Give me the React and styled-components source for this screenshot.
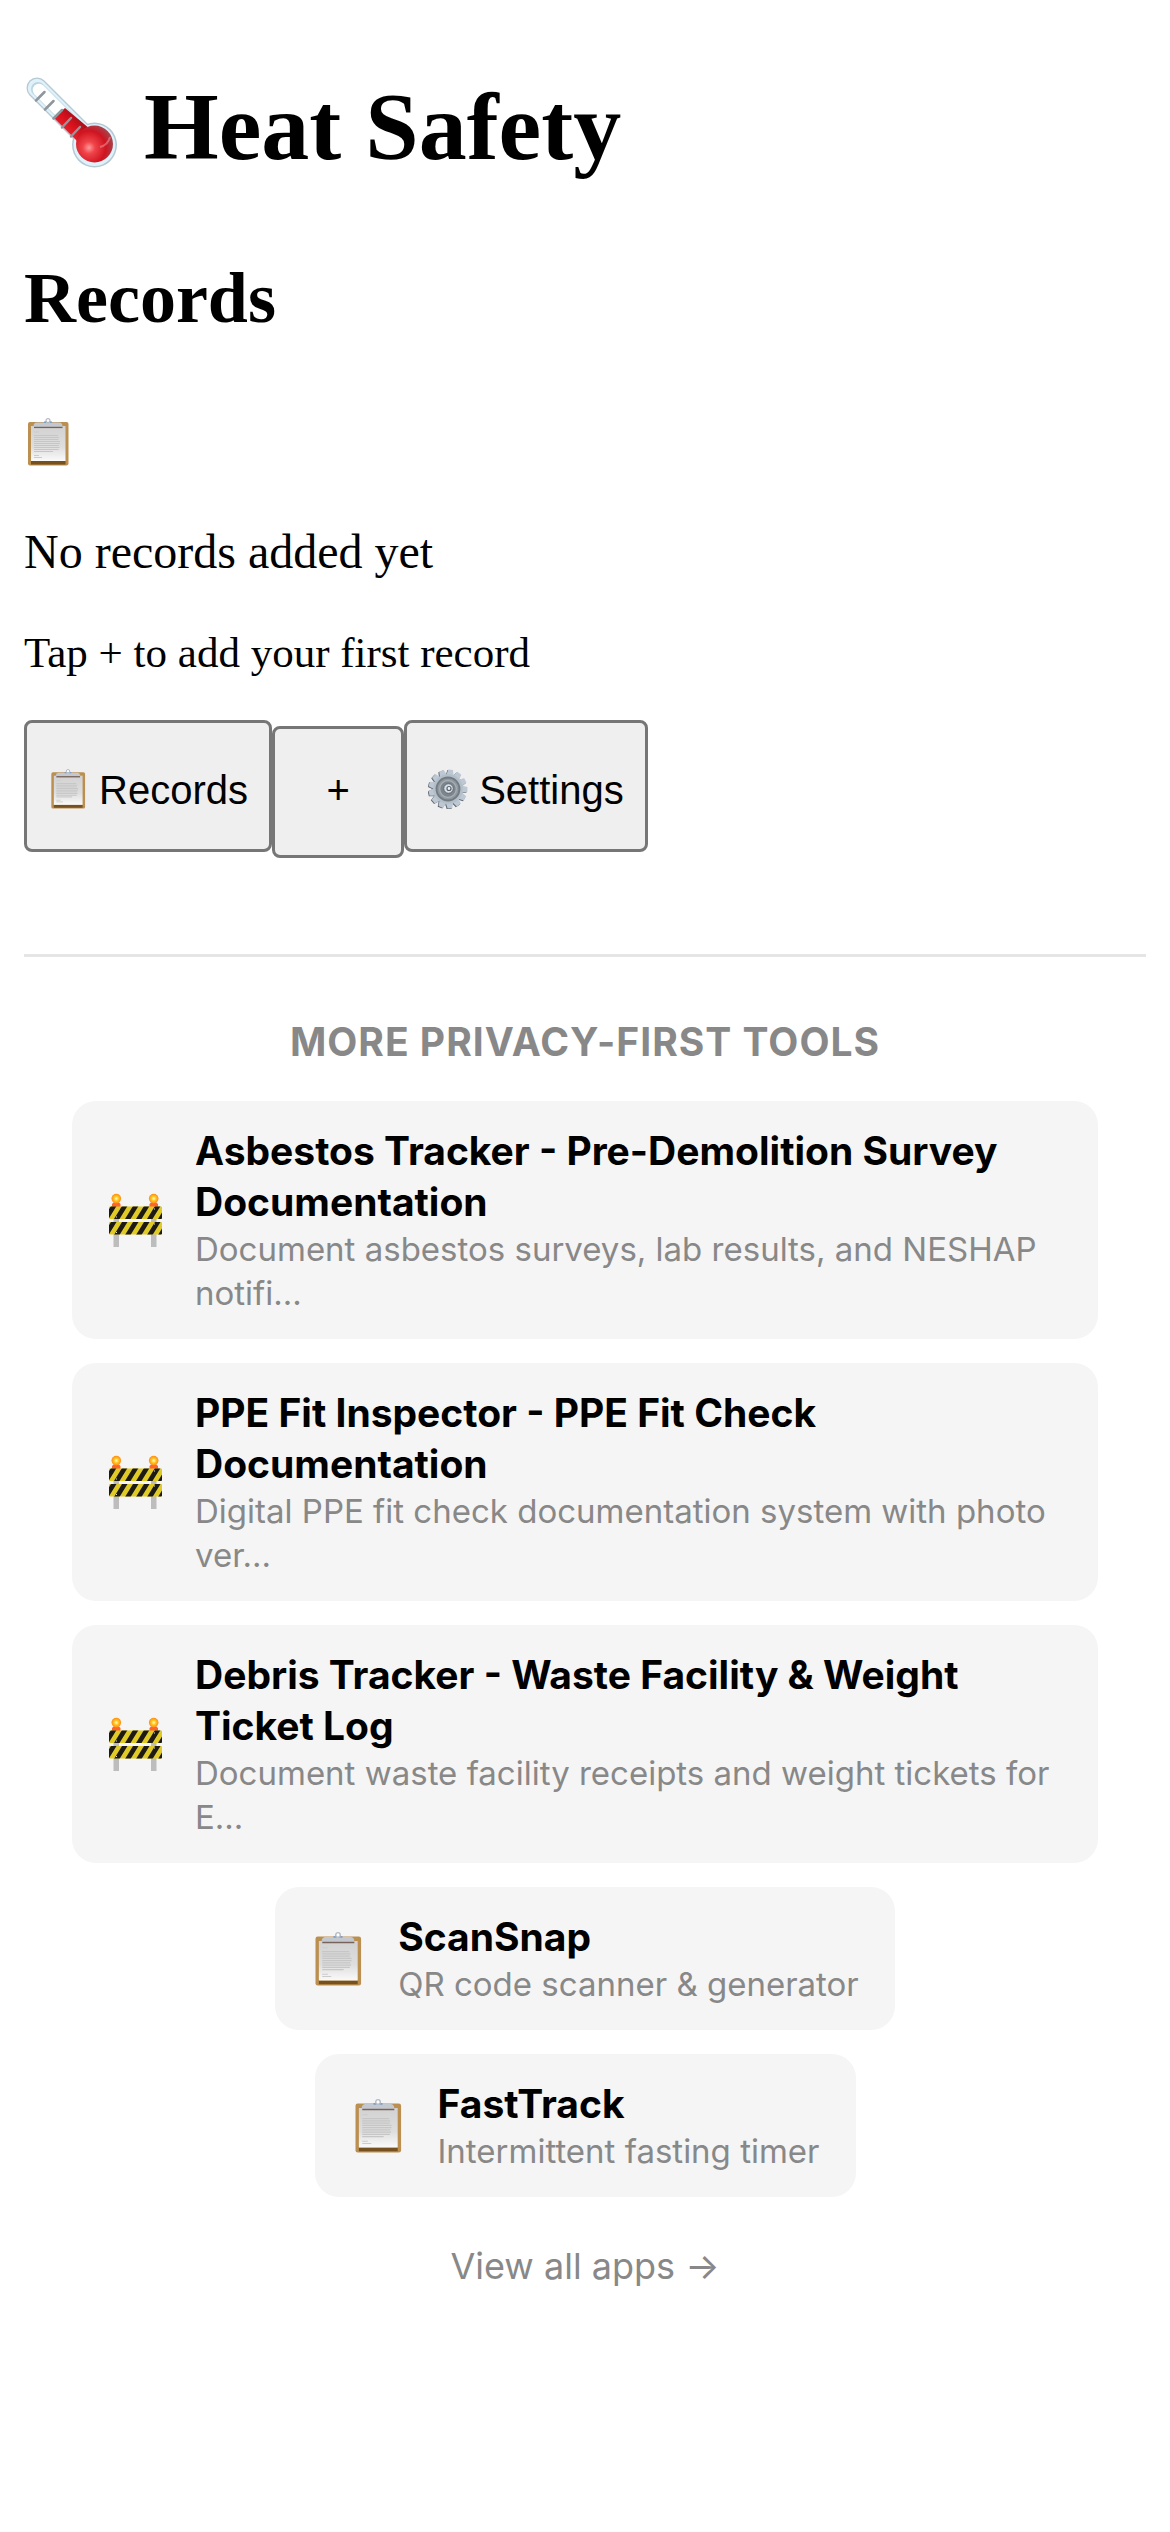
import styled, { createGlobalStyle } from 'styled-components'

const GlobalStyle = createGlobalStyle`
  * {
    box-sizing: border-box;
  }
  body {
    margin: 24px;
    background: #fff;
    color: #000;
    font-family: 'Liberation Serif', 'Times New Roman', serif;
  }
`

// Styled components
const Header = styled.header`
  padding-top: 48px;
`

const Title = styled.h1`
  display: flex;
  align-items: flex-start;
  gap: 24px;
  margin: 0 0 74px;
  font-size: 96px;
  line-height: 110px;
`

const SectionTitle = styled.h2`
  margin: 0 0 78px;
  font-size: 72px;
  line-height: 84px;
`

const EmptyIcon = styled.div`
  display: flex;
  margin-bottom: 58px;
`

const EmptyText = styled.p`
  margin: 0 0 48px;
  font-size: 48px;
  line-height: 56px;
`

const EmptyHint = styled.p`
  margin: 0 0 42px;
  font-size: 43px;
  line-height: 50px;
`

const Nav = styled.nav`
  display: flex;
  align-items: baseline;
`

const NavButton = styled.button`
  min-width: 132px;
  min-height: 132px;
  padding: ${(props) => (props.$withIcon ? '8px 21px 0' : '0 21px 4px')};
  border: 3px solid #767676;
  border-radius: 8px;
  background-color: #efefef;
  color: #000;
  font-family: 'Liberation Sans', Arial, sans-serif;
  font-size: 40px;
  line-height: 46px;
  cursor: pointer;
`

const Glyph = styled.svg`
  flex-shrink: 0;
  width: ${(props) => props.$size}px;
  height: ${(props) => props.$size}px;
  vertical-align: -5px;
`

const Footer = styled.footer`
  margin-top: 96px;
  padding: 48px;
  border-top: 3px solid #e5e5e5;
  font-family: Inter, sans-serif;
  text-align: center;
`

const FooterTitle = styled.h3`
  margin: 10px 0 32px;
  color: #888;
  font-size: 39px;
  font-weight: 700;
  line-height: 54px;
  letter-spacing: 1px;
  text-transform: uppercase;
`

const AppList = styled.div`
  display: flex;
  flex-direction: column;
  align-items: center;
  gap: 24px;
`

const AppCard = styled.a`
  display: flex;
  align-items: center;
  gap: 33px;
  padding: 24px 36px;
  border-radius: 24px;
  background-color: #f5f5f5;
  color: #000;
  text-align: left;
  text-decoration: none;
`

const AppName = styled.div`
  font-size: 39px;
  font-weight: 700;
  line-height: 51px;
`

const AppDescription = styled.div`
  color: #888;
  font-size: 33px;
  line-height: 44px;
`

const ViewAll = styled.a`
  display: inline-block;
  margin-top: 43px;
  color: #888;
  font-size: 36px;
  line-height: 52px;
  text-decoration: none;
`

// Icons
const Thermometer = ({ size }) => (
  <Glyph $size={size} viewBox="0 -3 96 96" aria-hidden="true">
    <defs>
      <radialGradient id="bulb" cx="0.35" cy="0.6" r="0.65">
        <stop offset="0" stopColor="#ff9a9a" />
        <stop offset="0.25" stopColor="#f0444a" />
        <stop offset="0.7" stopColor="#cf1420" />
        <stop offset="1" stopColor="#a8404a" />
      </radialGradient>
      <linearGradient id="fluid" x1="0" y1="1" x2="1" y2="0">
        <stop offset="0" stopColor="#ff4048" />
        <stop offset="0.5" stopColor="#d8101c" />
        <stop offset="1" stopColor="#5c1018" />
      </linearGradient>
    </defs>
    <path d="M13 13L70 70" stroke="#b5c9d3" strokeWidth="21" strokeLinecap="round" />
    <circle cx="70.500" cy="70" r="22.500" fill="#b5c9d3" />
    <path d="M13 13L70 70" stroke="#dff1fa" strokeWidth="18.500" strokeLinecap="round" />
    <circle cx="70.500" cy="70" r="21" fill="#dff1fa" />
    <path d="M14 14L66 66" stroke="#bcd6e2" strokeWidth="14" strokeLinecap="round" />
    <path d="M15 15L66 66" stroke="#fff" strokeWidth="12.500" strokeLinecap="round" />
    <path d="M30 43L41 33L66 54L53 66Z" fill="url(#fluid)" />
    <circle cx="70.500" cy="69" r="18.500" fill="url(#bulb)" />
    <path d="M76 72Q84 70 86 62" stroke="#f08a90" strokeWidth="2" fill="none" opacity="0.6" />
    <path
      d="M12 25.500L20.500 17M21 34.500L29.500 26M29.500 43.500L38 35M38 52.500L47 43M47 61.500L56 52"
      stroke="#8f979d"
      strokeWidth="2.500"
      strokeLinecap="round"
    />
  </Glyph>
)

const Clipboard = ({ size }) => (
  <Glyph $size={size} viewBox="0 0 48 48" aria-hidden="true">
    <defs>
      <linearGradient id="paper" x1="0" y1="0" x2="0" y2="1">
        <stop offset="0" stopColor="#d2d2d2" />
        <stop offset="0.6" stopColor="#dedede" />
        <stop offset="1" stopColor="#fafafa" />
      </linearGradient>
    </defs>
    <rect x="4" y="4" width="40.500" height="43.500" rx="2" fill="#bb8f4f" />
    <path d="M7 43H41.500V46.500H7Z" fill="#76501f" />
    <path d="M7 8H41.500V43H7Z" fill="url(#paper)" />
    <path d="M10 14H15M10 37.500H15M10 39.500H18" stroke="#cbcbcb" />
    <path
      d="M10 17.500H34M10 19.500H35M10 21.500H34.500M10 23.500H36M10 25.500H36M10 27.500H35M10 29.500H35.500M10 31.500H34.500M10 33.500H29"
      stroke="#c6c6c6"
      strokeWidth="1.200"
    />
    <path d="M10 9.300H38.500" stroke="#77635a" strokeWidth="1.600" />
    <path d="M9.500 8.500Q9.500 4.500 13 4.500H20L21.500 3H26.500L28 4.500H35Q38.500 4.500 38.500 8.500Z" fill="#c3c7cf" />
    <path d="M20 4.300H22.500M25.500 4.300H28" stroke="#7f9cc4" strokeWidth="1.500" />
    <circle cx="24" cy="2.600" r="2" fill="#fff" stroke="#b3b9c2" strokeWidth="1.200" />
  </Glyph>
)

const TEETH = Array.from({ length: 13 }, (_, i) => (i * 360) / 13 + 8)

const Gear = ({ size }) => (
  <Glyph $size={size} viewBox="0 0 40 40" aria-hidden="true">
    {TEETH.map((angle) => (
      <path key={angle} d="M16 8L17.500 .600H22.500L24 8Z" fill="#5f666e" transform={`translate(-.8 .6) rotate(${angle} 20 20)`} />
    ))}
    {TEETH.map((angle) => (
      <path key={angle} d="M16 8L17.600 .600H22.400L24 8Z" fill="#bcc8d3" transform={`rotate(${angle} 20 20)`} />
    ))}
    <circle cx="20" cy="20" r="14.800" fill="#b3bec8" />
    <circle cx="20" cy="20" r="11.500" fill="#9199a0" stroke="#737b82" strokeWidth="1.800" />
    <circle cx="20" cy="20" r="8.300" fill="#7d858c" stroke="#a9b1b8" strokeWidth="1.200" />
    <circle cx="20.500" cy="19.500" r="4.800" fill="#d3dee7" stroke="#5f676e" />
    <circle cx="21" cy="19.500" r="2" fill="#f2f2f2" stroke="#59616a" strokeWidth="1.200" />
  </Glyph>
)

const Barrier = ({ size }) => (
  <Glyph $size={size} viewBox="0 0 54 54" aria-hidden="true">
    <defs>
      <clipPath id="planks">
        <rect x="1" y="13.500" width="53" height="12.500" rx="1" />
        <rect x="1" y="29" width="53" height="12.500" rx="1" />
      </clipPath>
      <radialGradient id="lamp">
        <stop offset="0.1" stopColor="#fff6a0" />
        <stop offset="0.45" stopColor="#ffc928" />
        <stop offset="1" stopColor="#ff8a10" />
      </radialGradient>
    </defs>
    <path d="M5.500 24H11V54H5.500ZM43 24H48.500V54H43Z" fill="#bdbdbd" />
    <path d="M4 14V11L5.500 9.500H11L12.500 11V14ZM41.500 14V11L43 9.500H48.500L50 11V14Z" fill="#ff642c" />
    <circle cx="8.300" cy="5.600" r="4.800" fill="url(#lamp)" />
    <circle cx="45.700" cy="5.600" r="4.800" fill="url(#lamp)" />
    <g clipPath="url(#planks)">
      <path d="M0 13H54V42H0Z" fill="#e0ca25" />
      {[-5, 6, 17, 28, 39, 50].map((x) => (
        <path key={x} d={`M${x} 26l8 -13h5.500l-8 13zM${x} 42l8 -13h5.500l-8 13z`} fill="#1d1a16" />
      ))}
    </g>
    <path d="M8 24h1M46 16h1M8 39.500h1M46 31h1" stroke="#ddd" />
  </Glyph>
)

const apps = [
  {
    name: 'Asbestos Tracker - Pre-Demolition Survey Documentation',
    description: 'Document asbestos surveys, lab results, and NESHAP notifi...',
    icon: Barrier,
  },
  {
    name: 'PPE Fit Inspector - PPE Fit Check Documentation',
    description: 'Digital PPE fit check documentation system with photo ver...',
    icon: Barrier,
  },
  {
    name: 'Debris Tracker - Waste Facility & Weight Ticket Log',
    description: 'Document waste facility receipts and weight tickets for E...',
    icon: Barrier,
  },
  { name: 'ScanSnap', description: 'QR code scanner & generator', icon: Clipboard },
  { name: 'FastTrack', description: 'Intermittent fasting timer', icon: Clipboard },
]

export default function App() {
  return (
    <>
      <GlobalStyle />
      <Header>
        <Title>
          <Thermometer size={96} />
          Heat Safety
        </Title>
      </Header>
      <main>
        <SectionTitle>Records</SectionTitle>
        <EmptyIcon>
          <Clipboard size={48} />
        </EmptyIcon>
        <EmptyText>No records added yet</EmptyText>
        <EmptyHint>Tap + to add your first record</EmptyHint>
      </main>
      <Nav>
        <NavButton type="button" $withIcon>
          <Clipboard size={40} /> Records
        </NavButton>
        <NavButton type="button">+</NavButton>
        <NavButton type="button" $withIcon>
          <Gear size={40} /> Settings
        </NavButton>
      </Nav>
      <Footer>
        <FooterTitle>More Privacy-First Tools</FooterTitle>
        <AppList>
          {apps.map(({ name, description, icon: Icon }) => (
            <AppCard key={name} href="#">
              <Icon size={54} />
              <div>
                <AppName>{name}</AppName>
                <AppDescription>{description}</AppDescription>
              </div>
            </AppCard>
          ))}
        </AppList>
        <ViewAll href="#">View all apps →</ViewAll>
      </Footer>
    </>
  )
}
